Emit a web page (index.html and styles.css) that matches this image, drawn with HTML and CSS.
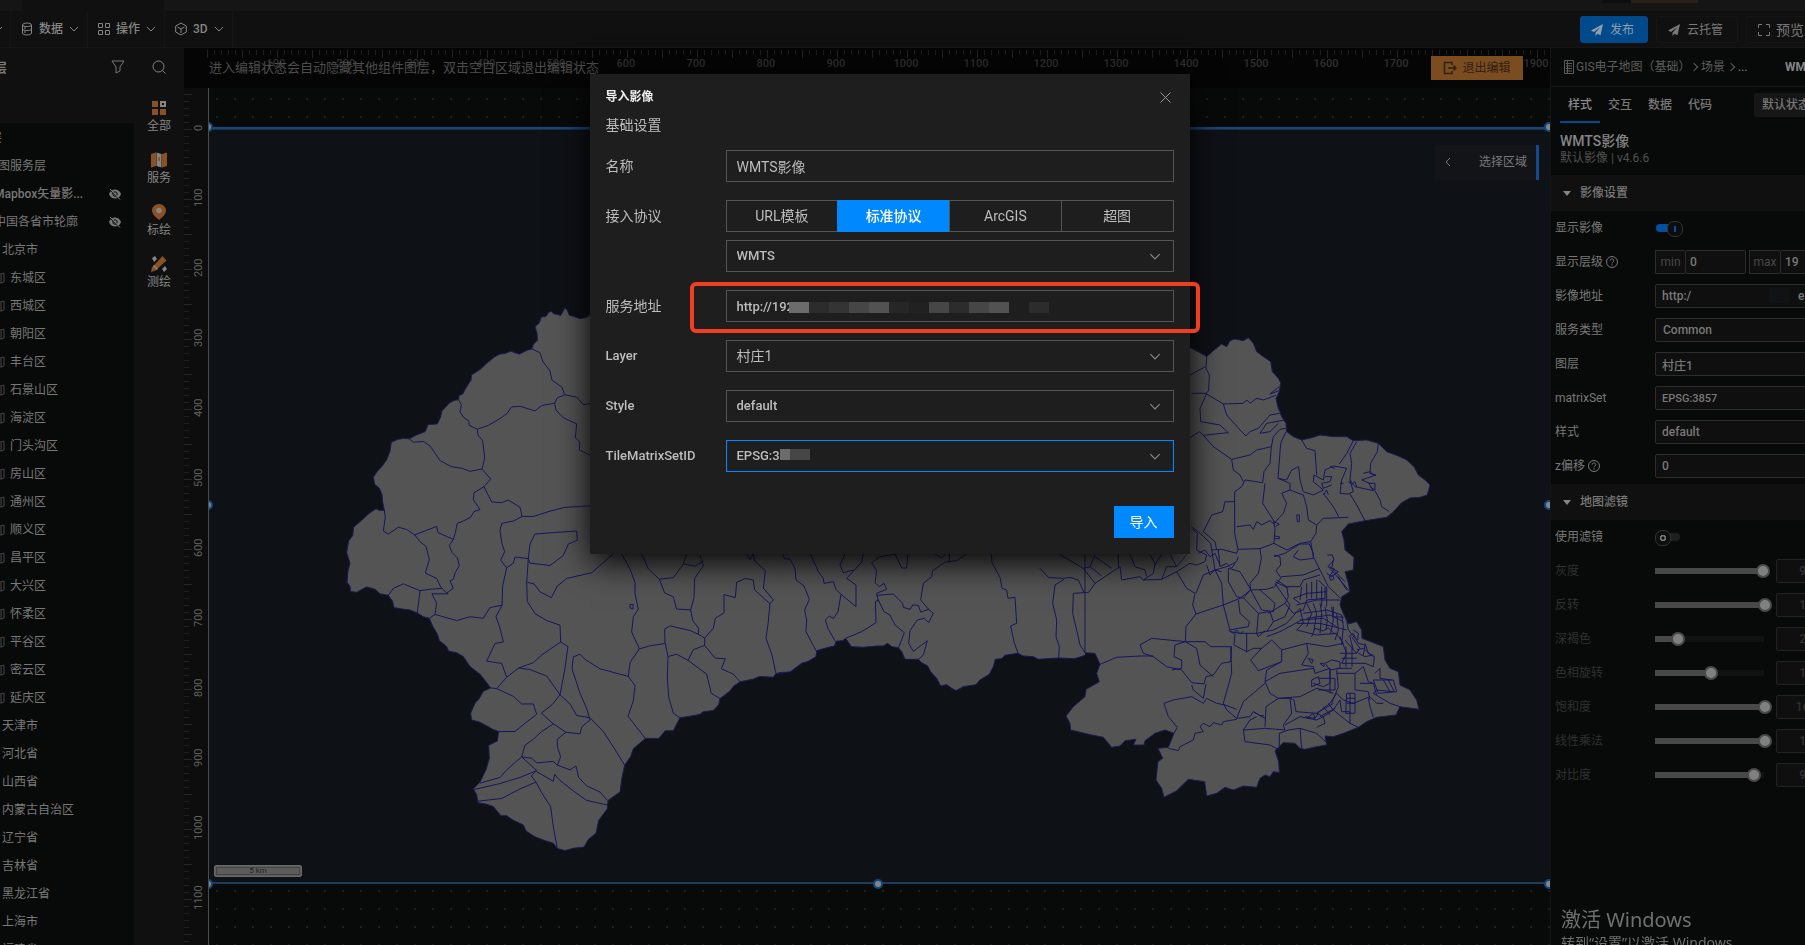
FILE: index.html
```html
<!DOCTYPE html>
<html lang="zh-CN">
<head>
<meta charset="utf-8">
<title>GIS电子地图 - 导入影像</title>
<link rel="stylesheet" href="styles.css">
</head>
<body>
<svg class="defs" aria-hidden="true">
  <symbol id="chev" viewBox="0 0 10 6"><path d="M1 1l4 4 4-4" fill="none" stroke="currentColor"/></symbol>
  <symbol id="plane" viewBox="0 0 12 12"><path d="M12 0L0 6.500l3 1.500L9.500 3 4.500 8.800V12l2-2.300 3 1.500z" fill="currentColor"/></symbol>
  <symbol id="eyeoff" viewBox="0 0 12 12"><path d="M0 6c2-6 10-6 12 0-2 6-10 6-12 0z" fill="currentColor"/><circle cx="6" cy="6" r="2.200" fill="none" stroke="#080a09"/><path d="M0 1l10.500 11" stroke="#080a09"/><path d="M1 1l10 10.500" stroke="currentColor"/></symbol>
  <symbol id="fold" viewBox="0 0 12 12"><path d="M1 2l3-1 4 1 3-1v9l-3 1-4-1-3 1zM4 1v9M8 2v9" fill="none" stroke="currentColor"/></symbol>
  <symbol id="help" viewBox="0 0 14 14"><circle cx="7" cy="7" r="5.500" fill="none" stroke="currentColor"/><path d="M5.200 5.700c0-2.400 3.600-2.300 3.600 0 0 1.400-1.800 1.300-1.800 2.700M7 9.300v1.200" fill="none" stroke="currentColor"/></symbol>
</svg>
<div class="app">
  <div class="strip"><span class="strip-tab"></span><span class="strip-end"><i></i><b></b></span></div>
  <header class="toolbar">
    <nav class="menus">
      <button class="menu menu-cut" aria-label="更多"><svg class="chev"><use href="#chev"/></svg></button>
      <button class="menu"><svg class="ic" viewBox="0 0 12 14"><path d="M1.500 3c0-2.600 9-2.600 9 0v8c0 2.600-9 2.600-9 0zM1.500 3c0 2 9 2 9 0M1.500 7c0 2 9 2 9 0M3 6h2M3 10h2" fill="none" stroke="currentColor"/></svg>数据<svg class="chev"><use href="#chev"/></svg></button>
      <button class="menu"><svg class="ic" viewBox="0 0 12 14"><path d="M.5 1.500h4v4h-4zM7.500 1.500h4v4h-4zM.5 8.500h4v4h-4zM7.500 8.500h4v4h-4z" fill="none" stroke="currentColor"/></svg>操作<svg class="chev"><use href="#chev"/></svg></button>
      <button class="menu"><svg class="ic" viewBox="0 0 12 14"><path d="M6 1l5.300 3v6L6 13 .7 10V4zM2.500 5L6 7l3.500-2M6 7v4" fill="none" stroke="currentColor"/></svg>3D<svg class="chev"><use href="#chev"/></svg></button>
    </nav>
    <div class="actions">
      <button class="act primary"><svg class="ic12"><use href="#plane"/></svg>发布</button>
      <button class="act"><svg class="ic12"><use href="#plane"/></svg>云托管</button>
      <button class="act big"><svg class="ic12" viewBox="0 0 12 12"><path d="M4 .5H.5V4M8 .5h3.500V4M4 11.500H.5V8M8 11.500h3.500V8" fill="none" stroke="currentColor"/></svg>预览</button>
    </div>
  </header>
  <div class="work">
    <aside class="layers">
      <div class="layers-head"><h2>层</h2><button class="plain" aria-label="筛选"><svg width="14" height="14" viewBox="0 0 14 14"><path d="M1 1h12L9 7v4l-4 2V7z" fill="none" stroke="currentColor"/></svg></button></div>
      <ul class="tree">
        <li class="d-root">层</li>
        <li class="d-group">图服务层</li>
        <li class="d-item">Mapbox矢量影...<svg class="eye"><use href="#eyeoff"/></svg></li>
        <li class="d-long">中国各省市轮廓<svg class="eye"><use href="#eyeoff"/></svg></li>
        <li>北京市</li>
        <li class="d-sub"><svg class="ic12"><use href="#fold"/></svg>东城区</li>
        <li class="d-sub"><svg class="ic12"><use href="#fold"/></svg>西城区</li>
        <li class="d-sub"><svg class="ic12"><use href="#fold"/></svg>朝阳区</li>
        <li class="d-sub"><svg class="ic12"><use href="#fold"/></svg>丰台区</li>
        <li class="d-sub"><svg class="ic12"><use href="#fold"/></svg>石景山区</li>
        <li class="d-sub"><svg class="ic12"><use href="#fold"/></svg>海淀区</li>
        <li class="d-sub"><svg class="ic12"><use href="#fold"/></svg>门头沟区</li>
        <li class="d-sub"><svg class="ic12"><use href="#fold"/></svg>房山区</li>
        <li class="d-sub"><svg class="ic12"><use href="#fold"/></svg>通州区</li>
        <li class="d-sub"><svg class="ic12"><use href="#fold"/></svg>顺义区</li>
        <li class="d-sub"><svg class="ic12"><use href="#fold"/></svg>昌平区</li>
        <li class="d-sub"><svg class="ic12"><use href="#fold"/></svg>大兴区</li>
        <li class="d-sub"><svg class="ic12"><use href="#fold"/></svg>怀柔区</li>
        <li class="d-sub"><svg class="ic12"><use href="#fold"/></svg>平谷区</li>
        <li class="d-sub"><svg class="ic12"><use href="#fold"/></svg>密云区</li>
        <li class="d-sub"><svg class="ic12"><use href="#fold"/></svg>延庆区</li>
        <li>天津市</li><li>河北省</li><li>山西省</li><li>内蒙古自治区</li><li>辽宁省</li><li>吉林省</li><li>黑龙江省</li><li>上海市</li><li>福建省</li>
      </ul>
    </aside>
    <nav class="cats">
      <button class="plain" aria-label="搜索"><svg width="14" height="14" viewBox="0 0 14 14"><circle cx="6.500" cy="6.500" r="5.500" fill="none" stroke="currentColor"/><path d="M10.500 10.500l3 3" stroke="currentColor"/></svg></button>
      <button class="cat"><svg viewBox="0 0 16 16"><path fill="#8a5125" d="M1 1h6v6H1zM1 9h6v6H1zM9 9h6v6H9z"/><path fill="none" stroke="#858585" stroke-width="2" d="M10 2h4v4h-4z"/></svg>全部</button>
      <button class="cat"><svg viewBox="0 0 16 16"><path fill="#8a5125" d="M0 2l5-1.500V14l-5 1.500zM11 2l5-1.500V14l-5 1.500z"/><path fill="#858585" d="M5.500.5L10.500 2v13.500L5.500 14z"/><path fill="#8a5125" d="M7 5l2 .6V9l-2-.6z"/></svg>服务</button>
      <button class="cat"><svg viewBox="0 0 16 16"><path fill="#8a5125" d="M8 0c4 0 7 3 7 6.500C15 11 10 14 8 16 6 14 1 11 1 6.500 1 3 4 0 8 0z"/><circle cx="8" cy="6.500" r="2.800" fill="#858585"/></svg>标绘</button>
      <button class="cat"><svg viewBox="0 0 16 16"><path d="M1 2l3-2 2 3-3 3zM11 13l3-3 2 3-3 3z" fill="#858585"/><path fill="#8a5125" d="M11.500 0L15.500 4.500 4.500 14.500 0 16l1-4.500z"/><path d="M2.500 9.500l4 4" stroke="#858585" stroke-width="1.500"/></svg>测绘</button>
    </nav>
    <main class="editor">
      <div class="ruler-x">
        <ol><li>100</li><li>200</li><li>300</li><li>400</li><li>500</li><li>600</li><li>700</li><li>800</li><li>900</li><li>1000</li><li>1100</li><li>1200</li><li>1300</li><li>1400</li><li>1500</li><li>1600</li><li>1700</li><li>1800</li><li>1900</li></ol>
        <div class="edit-bar"><span>进入编辑状态会自动隐藏其他组件图层，双击空白区域退出编辑状态</span>
          <button class="exit"><svg viewBox="0 0 14 14"><path d="M9 4V1.500H1.500v11H9V10M5 7h8M10.500 4.500L13 7l-2.500 2.500" fill="none" stroke="currentColor" stroke-width="1.500"/></svg>退出编辑</button></div>
      </div>
      <div class="ruler-y"><ol><li>0</li><li>100</li><li>200</li><li>300</li><li>400</li><li>500</li><li>600</li><li>700</li><li>800</li><li>900</li><li>1000</li><li>1100</li></ol></div>
      <div class="stage">
        <svg class="map" viewBox="209 88 1341 857" preserveAspectRatio="xMinYMin slice" role="img" aria-label="村庄影像">
          <rect x="209" y="129" width="1341" height="754" fill="#0e1116"/>
          <path d="M209 128h1341" stroke="#0c4a85" stroke-width="2"/><path d="M209 129.500h1341" stroke="#292d33"/>
          <path d="M209 883h1341" stroke="#1d3c5a" stroke-width="2"/>
          <g transform="translate(320 280) scale(.33333 .38265)">
            <path class="land" d="M830 60L808 92 800 98 780 101 760 95 748 92 742 80 735 72 728 84 722 93 712 90 700 88 695 82 686 84 678 95 664 97 658 112 645 122 651 138 652 158 640 168 636 180 620 184 598 194 585 190 572 186 555 192 538 194 520 203 500 218 480 234 455 248 453 262 445 272 436 285 428 298 417 302 416 313 405 314 390 320 366 342 362 358 352 376 324 378 316 396 290 405 268 415 250 414 232 417 214 424 210 448 200 470 185 488 170 502 160 516 164 534 178 544 186 560 188 580 193 602 178 602 168 598 150 608 125 628 101 646 98 668 86 682 80 712 90 740 84 760 81 790 90 800 92 814 110 816 140 802 165 808 180 820 205 824 218 840 222 856 240 859 268 862 292 870 310 880 328 884 338 905 352 925 358 942 380 958 386 970 410 974 430 984 450 1010 480 1030 500 1052 512 1066 490 1075 476 1096 466 1104 452 1132 455 1150 478 1155 500 1165 520 1175 536 1180 532 1205 506 1216 508 1250 498 1280 480 1312 460 1330 470 1345 474 1366 500 1370 520 1376 543 1400 560 1400 580 1412 610 1424 618 1440 645 1455 675 1465 700 1472 712 1486 735 1491 760 1485 792 1482 805 1462 828 1446 836 1412 862 1382 864 1360 900 1338 906 1300 914 1268 932 1245 940 1225 976 1198 1016 1198 1036 1178 1060 1178 1080 1144 1110 1140 1140 1135 1150 1128 1180 1125 1196 1110 1200 1094 1230 1074 1240 1062 1260 1050 1300 1043 1318 1036 1360 1038 1368 1028 1390 1027 1390 700 830 700z"/>
            <path class="edge" d="M636 180L660 190 668 212 690 238 696 262 726 280 734 300 712 308 704 322 708 340 730 360 770 376 766 412 780 424 778 444 815 460M734 300L770 306 790 326 815 322M416 313L424 326 420 345 432 360 446 368 448 380 472 390 505 380 540 362 562 348 574 332 600 330 645 342 665 328 704 322M268 415L280 424 310 422 330 434 345 452 360 472 395 488 425 492 450 500 486 494 494 465 488 420 474 405 472 390M486 494L512 520 492 540 462 556 460 574 480 600 462 605 452 620 430 630 412 636 406 660 400 678 388 694 396 712 412 726 418 746 406 764 400 782 390 786 400 806 380 818 362 802 350 780 316 766 328 730 318 696 300 684 284 666 260 652 235 646 205 664 190 656 196 620 193 602M284 666L350 644 354 660 400 678M492 540L515 580 545 582 565 575 600 594 606 618 580 630 545 636 540 655 546 690 554 710 542 732 560 752 580 740 585 724 625 728 630 740 690 746 730 720 745 690 772 680 770 656 700 660 645 664 630 690 625 728 620 790 622 840 645 872 680 890 720 902 722 946 744 958 734 1020 720 1084 696 1110 664 1132 700 1160 738 1182 780 1186 785 1168 810 1150 800 1120 780 1080 756 1016 760 985 780 978 796 992 840 1016 925 1036 945 1060 940 1100 924 1140 976 1198M606 618L640 618 690 604 735 594 815 590M622 790L642 794 660 815 694 830 712 800 740 780 780 772 815 765 880 716M560 752L548 800 546 850 510 856 490 884 450 880 410 890 345 874 350 845 336 820 385 820M205 824L220 806 250 794 300 812 330 808 365 806M300 812L292 870M328 884L345 874M546 850L528 880 540 910 550 946 525 950 500 996 545 1002 560 1038 530 1068 512 1066M560 1038L596 1014 630 1018 680 1035 720 1084 750 1108 770 1138 810 1144 850 1180 880 1220 914 1268M596 1014L640 1000 665 980 722 946M530 1068L580 1088 605 1108 640 1108 650 1135 620 1155 585 1180 536 1180M700 1160L665 1180 640 1200 615 1216 605 1246 635 1250 650 1262 700 1258 712 1268 722 1246 712 1220 712 1200 738 1182M605 1246L560 1280 540 1300 480 1315M605 1246L650 1282 600 1300 540 1316 460 1332M650 1282L634 1296 648 1312 600 1330 545 1355 474 1362M648 1312L665 1340 692 1376 700 1430 712 1486M650 1285L700 1310 704 1292 720 1308 760 1335 800 1360 862 1372M712 1268L750 1280 768 1270 776 1300 800 1322 840 1338 862 1360M905 716L930 755 945 790 945 820 955 860 940 880 935 920 958 964 930 1000 925 1036M958 964L990 956 1035 950 1034 912 1050 904 1110 916 1140 928 1154 936 1154 955 1120 966 1104 994 1070 978 1044 984 1036 950M1044 984L1042 1040 1046 1090 1060 1132 1080 1144M1104 994L1160 1030 1174 1080 1200 1094M1154 955L1185 988 1216 990 1204 1016 1240 1030 1260 1050M965 716L985 755 1018 782 1034 818 1060 828 1070 860 1112 862 1122 830 1124 780 1150 746 1140 720M1018 782L1060 778 1090 742 1100 716M1090 742L1125 748 1150 735M1112 862L1118 890 1136 910 1135 926M1154 936L1180 910 1186 884 1212 870 1212 822 1246 830 1250 790 1276 780 1300 784 1304 810 1350 846 1360 836 1330 805 1336 760 1305 735 1300 716M1350 846L1344 900 1338 936 1356 980 1368 1028M1280 716l10 15 8-14 8 20M930 848h10l-2 12-8-4z"/>
          </g>
          <g transform="translate(780 540) scale(.33333)">
            <path class="land noline" d="M-8 0V398L30 396 65 370 85 364 108 350 110 332 145 322 164 318 168 304 188 302 197 295 214 320 250 322 290 318 310 318 323 310 335 320 355 323 365 335 375 358 415 358 425 368 443 378 452 395 470 415 482 438 500 434 515 445 528 452 550 440 588 434 600 420 628 403 640 380 646 358 665 356 675 346 714 340 730 348 760 350 775 358 835 354 885 356 915 346 915 0z"/>
            <path class="edge" d="M-5 398L30 396 65 370 85 364 108 350 110 332 145 322 164 318 168 304 188 302 197 295 214 320 250 322 290 318 310 318 323 310 335 320 355 323 365 335 375 358 415 358 425 368 443 378 452 395 470 415 482 438 500 434 515 445 528 452 550 440 588 434 600 420 628 403 640 380 646 358 665 356 675 346 714 340 730 348 760 350 775 358 835 354 885 356 915 346M8 42L12 55 30 58 45 85 48 120 72 138 88 178 74 210 80 240 78 275 108 332M92 42L115 95 130 115 132 130 160 125 168 148 183 163 228 200 228 135 200 115 222 92 245 66 250 42M183 163L174 215 160 236 148 228 136 240 145 268 166 304M197 295L245 275 288 248 286 185 295 180 312 215 330 225 345 255 373 278 356 323M195 42L180 75 190 98 222 90M350 42L300 50 275 68 290 92 285 128 298 140 312 130 320 148 290 160 295 185M290 166L340 162 368 190 370 202 390 208 398 195 415 196 422 216 446 208 460 220 446 248 432 235 412 240 390 272 386 310 400 334 442 302 430 345 415 358M345 42L365 84 380 84 384 42M560 42L530 62 496 66 458 92 455 110 430 130 422 180 446 208M508 42V62M465 42l20 12 12-12M634 42L636 68 660 112 666 145 680 150 684 175 705 172 710 250 692 258 702 305 714 340"/>
          </g>
          <g transform="translate(1040 320) scale(.33333)">
            <path class="land" d="M440 80L455 85 480 98 500 110 520 92 545 72 560 80 570 62 585 57 610 62 625 53 640 70 650 95 670 110 692 125 697 155 715 175 722 188 718 215 708 235 714 262 725 290 738 310 740 335 760 350 785 360 820 352 840 345 880 350 920 350 940 362 980 360 1015 370 1040 395 1075 408 1100 420 1122 440 1135 465 1155 480 1170 495 1162 525 1140 532 1110 534 1085 548 1060 575 1040 592 975 602 925 612 905 635 912 660 915 690 942 712 940 750 915 755 925 790 930 815 905 830 900 855 912 885 925 912 950 905 965 930 966 955 1000 968 1030 980 1035 1020 1050 1045 1075 1055 1080 1095 1110 1110 1130 1140 1137 1168 1080 1160 1068 1185 1010 1192 980 1205 955 1222 910 1240 880 1250 855 1248 860 1275 830 1280 795 1288 780 1285 765 1270 730 1268 705 1292 716 1325 718 1358 700 1355 690 1370 675 1365 660 1375 650 1402 610 1398 580 1410 555 1402 530 1420 500 1428 494 1385 445 1378 410 1412 372 1432 365 1405 348 1380 354 1325 368 1315 354 1285 385 1282 402 1240 375 1230 345 1240 315 1262 312 1275 280 1275 288 1258 255 1262 240 1278 215 1282 190 1252 155 1245 92 1230 90 1210 78 1188 100 1160 135 1130 138 1108 178 1085 170 1060 180 1033 165 1000 135 998 135 690 440 690z"/>
            <path class="edge" d="M500 110L498 145 508 165 506 210 500 220 455 220M450 165L496 140M500 220L480 265 482 305 540 315 565 338 490 346 478 335 450 353M500 222L550 252 610 250 620 240 630 250 650 235 670 240 708 226M550 252L560 285 600 330 618 348 630 335 655 325 690 285 718 280M690 222L718 200M690 222l28-10M490 346L520 380 575 418 630 405 650 390 694 380 690 430 672 455 668 488 615 480 605 500 584 515 584 640 594 688 660 686 702 670 705 625 700 600 668 550 675 490M575 418L580 450 600 465 610 485M694 380L700 350 720 328 738 325M660 340L680 310 735 300M660 340L690 335 715 310M738 335L722 370 714 475 750 490 750 510 725 520 740 550 730 580 702 610M714 475L740 480 755 450 776 440 780 480 790 515 820 525 850 510 820 485 822 465 850 480 855 450 880 438 920 445 905 480 900 520 925 522 940 515 930 480 935 430 930 400 950 365M785 360L800 385 825 392 830 465M940 362L920 400 898 432M1015 370L1012 395 992 430 990 460 1008 465 965 480 985 488 1000 512 945 500 930 480M1005 512L1020 540 1025 560 1048 575M930 522L950 555 975 602M750 510L790 525 800 560 805 600 830 615 828 640 812 665 780 670 740 690 702 670M830 615L850 595 925 592M850 520L880 560 896 590M584 545L555 545 548 575 515 585 490 635 525 665 530 690M455 620L480 640 512 670 515 690 545 688 590 700 594 688M590 620L630 615 640 628 650 605 665 615 690 602 702 612M702 605l16 8-12 6M702 648l16 2v6h-14M770 585h8v20h-6zM660 686L664 715 655 760 630 790 632 810 680 808 705 800 725 770 790 765 840 745M702 705L720 710 722 735 708 752 722 772M702 710L735 700 780 672 808 672 820 700 820 715 780 720 760 710 775 690M812 665L820 710 840 750 865 800 902 835M455 625L472 640 470 690 500 705 495 725 470 735 450 730 410 755 440 805 465 820 458 855 468 882 438 920 436 965 335 955 300 975 310 1000 340 1010 380 1040 425 1050 455 1088 492 1092 498 1070 520 1065 545 1030 572 1025 575 980 512 980 495 965 436 965M436 965L405 975 402 1010 425 1020 425 1045 395 1050M436 965L470 985 480 1035 520 1070M515 690L525 750 490 765 468 820M525 750L560 740 590 725 595 710M525 750L545 790 550 855 468 882M565 745L565 785 590 830 610 835 632 808 600 755 565 745M550 855L600 835 632 810 665 870 700 875 705 850 660 810M550 855L570 930 595 925 625 920 628 905 600 880 595 840M570 935L600 940 650 940 655 880 612 835M655 880L690 875 700 905 735 890 750 855 705 790M650 940L700 930 740 910 780 865M680 950L720 935 785 900M585 940L582 975 620 995 620 940M620 995L640 985 665 985 695 960 725 990 725 1025 655 1052 632 1020 665 985M725 990L800 970 805 1000 785 1035 820 1040M725 1025L680 1050 675 1085 720 1060 820 1045M675 1085L690 1120 715 1135 780 1130 830 1105 850 1110 880 1120M675 1090L610 1145 590 1195 560 1170 550 1150 575 1060 572 980M590 1195L630 1190 640 1175 675 1195M675 1220L678 1160 715 1135 750 1135 755 1180 730 1215 735 1230 675 1225 610 1230 615 1265 690 1275 718 1290M480 1220L490 1210 510 1220 520 1208 545 1215 550 1205 590 1198M480 1220L490 1235 465 1240 460 1260 420 1280 415 1292 385 1285M372 1150L400 1140 455 1130 490 1150 500 1135 530 1150 555 1155 590 1168M372 1150L385 1190 412 1222 402 1240M455 1095L460 1110 490 1135 498 1092M180 1033L230 1012 300 1008 340 1008M718 1290L718 1240 745 1230 780 1225 785 1285M780 1225L830 1240 862 1270M45 795L38 850 50 900 48 950 58 980 56 1015M0 745L25 772 70 775 90 772 115 780 132 818 100 820 98 880 110 930 120 975 135 998M45 795L72 778M132 818L145 818 165 790 240 740 245 780 300 770 310 780 365 778 410 755M58 703L130 745 165 790M130 745L150 740 165 703M150 740L185 768M165 710L215 745M235 703V740M270 703L285 740 315 750 320 770M310 780L340 760 345 730 330 703M345 735L365 703M365 778L380 740 410 740 390 703M410 740L440 703"/>
            <path class="edge" d="M750 1135L762 1140 768 1175 830 1180 870 1150 890 1120 910 1140 940 1150 990 1130 1010 1150 1030 1150M830 1180L850 1190 880 1170 930 1210 955 1222M880 1170L900 1140 905 1175 930 1175 930 1210M1000 1192L990 1160 985 1135M1080 1160L1050 1150 1000 1120 1010 1110 1060 1115M710 780L740 800 780 800 790 780 840 765M740 800L745 830 735 850 760 880 790 870 800 840 855 835 855 800 835 780M785 800L780 840M800 790v45M815 785v50M830 780v58M845 800v60M860 800v60M760 835L800 820 860 815M770 855L830 840 900 840M780 865L790 910 770 930 830 945 890 940 910 970 860 980 800 970M790 880L860 870 905 885M800 895L870 885 910 905M780 900L850 895 890 920M770 910L840 910 920 930M800 850L815 880 800 920M820 850L830 880 822 930M840 850L845 880 840 940M855 860L862 900 858 930M875 860L880 900 872 940M890 880L895 930 885 960M905 885L910 920 905 975M920 905L925 930 945 955M815 950l10-25 25 8 15-10 20 20M880 860v30l32 2M862 705h15l5 15-18 20 20 8-15 20M880 720l-5 25 20 10-20 15-15-10M870 745L930 815M885 755L915 785M895 770l25 40M868 770l10-4 4 10-10 5zM900 950L920 1000 905 1030 975 1030 1000 1040 1003 1010 985 1000 975 970M915 960L950 1000 960 985 935 950M930 950l10 40M918 980v60M936 980v60M900 1000h50M905 1015h45M890 1045h45M855 1030l20-10 25 5v20l-30 5zM820 1040L825 1060 870 1045 870 1090 850 1100 820 1090M835 1075h50v35h-50M870 1050v70M890 1050L895 1100 875 1150M890 1060h55L970 1040 985 1085 1000 1090M945 1060V1110L985 1115 990 1140M960 1090h40l10 35M1005 1060l15-15v30l35 5M1000 1080h60l10 35-55 5zM1030 1080l20 35M1045 1080l18 35M1000 1010L970 985 950 990M805 1015l15 5-5 10zM840 1030h12v10zM815 1080l20-10 5 20-25 10zM920 1120h25v60h-28zM930 1120v60M920 1135h25M920 1150h25M800 1195l20-15 5 15 10-15M830 1180l50-30M840 1190l45-25M850 1160l20 25M865 1150l15 20M830 1200l20-10 5 20-25 12M735 1215L780 1190 830 1200M795 1190l30 5M855 470h20l-5 15-25 5 5 15 25-10M850 525l10-15 5 15M900 490h10M870 440l15 5M925 485l10 8 10-8 5 15M970 460l20-5 10 12M985 490h20v20l-15-10M640 1175l20 12 12 0M610 1230l20-30 20-10M475 700l20-10 15 20 15-10 15 35M500 735l10 30 15-15 20 5M535 690l5 50 20-10 15 15 10-15M565 930l15 10 10-10 10 12 10-8M650 940l5 10 20-18M700 905l-20 30M735 850l-50 30M745 805l-40-20M760 835l20 15M925 950l15-10 15 30 20 5-5 30M940 930l15 10-2 20M955 1000l20 10 25-5"/>
          </g>
          <g fill="#858585" stroke="#0c4a85" stroke-width="2"><circle cx="208" cy="127" r="4"/><circle cx="1549" cy="127" r="4"/><circle cx="208" cy="505" r="4"/><circle cx="1549" cy="505" r="4"/><circle cx="208" cy="884" r="4"/><circle cx="878" cy="884" r="4"/><circle cx="1549" cy="884" r="4"/></g>
        </svg>
        <div class="scale">5 km</div>
        <button class="region"><svg viewBox="0 0 6 10"><path d="M5 1L1 5l4 4" fill="none" stroke="currentColor"/></svg>选择区域</button>
      </div>
    </main>
    <aside class="props"><div class="props-in">
      <div class="crumb"><svg viewBox="0 0 10 14"><path d="M.5.5h9v13h-9zM2 3.500h6M2 6h6M2 8.500h6M2 11h6M3.500 1v12" fill="none" stroke="currentColor"/></svg><a href="#">GIS电子地图（基础）</a><i></i><a href="#">场景</a><i></i><a href="#" class="dots">...</a><strong>WMTS影像</strong></div>
      <div class="tabs"><button class="on">样式</button><button>交互</button><button>数据</button><button>代码</button><button class="state">默认状态</button></div>
      <div class="head"><h1>WMTS影像</h1><p>默认影像 | v4.6.6</p></div>
      <h3 class="sec">影像设置</h3>
      <div class="rows">
        <div class="row"><label for="show">显示影像</label><input class="switch on" type="checkbox" id="show" checked></div>
        <div class="row"><label for="lmin">显示层级<svg class="help"><use href="#help"/></svg></label><span class="addon">min</span><input class="box mini" id="lmin" value="0"><span class="addon second">max</span><input class="box mini" aria-label="max" value="19"></div>
        <div class="row"><label for="url2">影像地址</label><span class="masked"><input class="box" id="url2" value="http:/"><i></i><em>en</em></span></div>
        <div class="row"><label for="kind">服务类型</label><select class="box" id="kind"><option>Common</option></select></div>
        <div class="row"><label for="lay2">图层</label><input class="box" id="lay2" value="村庄1"></div>
        <div class="row"><label for="mset">matrixSet</label><input class="box" id="mset" value="EPSG:3857"></div>
        <div class="row"><label for="sty2">样式</label><input class="box" id="sty2" value="default"></div>
        <div class="row"><label for="zoff">z偏移<svg class="help"><use href="#help"/></svg></label><input class="box" id="zoff" value="0"></div>
      </div>
      <h3 class="sec">地图滤镜</h3>
      <div class="rows">
        <div class="row"><label for="usef">使用滤镜</label><input class="switch" type="checkbox" id="usef"></div>
        <div class="row off"><label for="f1">灰度</label><input type="range" id="f1" value="98" disabled style="--v:98%"><input class="box num" aria-label="灰度值" value="98" disabled></div>
        <div class="row off"><label for="f2">反转</label><input type="range" id="f2" value="100" disabled style="--v:100%"><input class="box num" aria-label="反转值" value="10" disabled></div>
        <div class="row off"><label for="f3">深褐色</label><input type="range" id="f3" value="16" disabled style="--v:16%"><input class="box num" aria-label="深褐色值" value="20" disabled></div>
        <div class="row off"><label for="f4">色相旋转</label><input type="range" id="f4" value="48" disabled style="--v:48%"><input class="box num" aria-label="色相旋转值" value="18" disabled></div>
        <div class="row off"><label for="f5">饱和度</label><input type="range" id="f5" value="100" disabled style="--v:100%"><input class="box num" aria-label="饱和度值" value="160" disabled></div>
        <div class="row off"><label for="f6">线性乘法</label><input type="range" id="f6" value="100" disabled style="--v:100%"><input class="box num" aria-label="线性乘法值" value="10" disabled></div>
        <div class="row off"><label for="f7">对比度</label><input type="range" id="f7" value="89" disabled style="--v:89%"><input class="box num" aria-label="对比度值" value="90" disabled></div>
      </div>
    </div></aside>
  </div>
</div>
<div class="watermark"><b>激活 Windows</b><span>转到“设置”以激活 Windows。</span></div>
<div class="modal" role="dialog" aria-labelledby="mt">
  <header><h2 id="mt">导入影像</h2><button class="close" aria-label="关闭"><svg viewBox="0 0 11 11"><path d="M.5.5l10 10M10.500.5l-10 10" stroke="currentColor"/></svg></button></header>
  <h3>基础设置</h3>
  <form>
    <div class="field"><label for="name">名称</label><input class="ctl mixed" id="name" value="WMTS影像"></div>
    <div class="field"><span class="lab">接入协议</span><div class="seg"><button type="button">URL模板</button><button type="button" class="on">标准协议</button><button type="button">ArcGIS</button><button type="button">超图</button></div></div>
    <div class="field"><span></span><div class="sel"><select class="ctl latin" aria-label="协议"><option>WMTS</option></select><svg class="chev"><use href="#chev"/></svg></div></div>
    <div class="field"><label for="url">服务地址</label><div class="sel"><input class="ctl latin" id="url" value="http://192"><div class="mosaic"><i class="m5"></i><i class="m2"></i><i class="m3"></i><i class="m4"></i><i class="m45"></i><i class="m1"></i><i class="m0"></i><i class="m4"></i><i class="m2"></i><i class="m4"></i><i class="m45"></i><i></i><i class="m2"></i></div><div class="mark"></div></div></div>
    <div class="field"><label class="latin" for="layer">Layer</label><div class="sel"><select class="ctl mixed" id="layer"><option>村庄1</option></select><svg class="chev"><use href="#chev"/></svg></div></div>
    <div class="field"><label class="latin" for="style">Style</label><div class="sel"><select class="ctl latin" id="style"><option>default</option></select><svg class="chev"><use href="#chev"/></svg></div></div>
    <div class="field"><label class="latin" for="tms">TileMatrixSetID</label><div class="sel"><select class="ctl latin focus" id="tms"><option>EPSG:3857</option></select><div class="mosaic short"><i class="m5"></i><i class="m4"></i></div><svg class="chev"><use href="#chev"/></svg></div></div>
    <div class="foot"><button type="button" class="import">导入</button></div>
  </form>
</div>
</body>
</html>
```
FILE: styles.css
```css
* { box-sizing: border-box; }
body { margin: 0; height: 100vh; overflow: hidden; background: #080a09; color: #787878; font: 12px/16px Roboto, "Noto Sans CJK SC", sans-serif; }
button, input, select { font: inherit; color: inherit; margin: 0; padding: 0; border: 0; background: none; border-radius: 0; appearance: none; outline: 0; }
ul, ol { list-style: none; margin: 0; padding: 0; }
h1, h2, h3, p { margin: 0; font-weight: 400; font-size: inherit; }
a { color: inherit; text-decoration: none; }
svg { display: block; flex: none; }
.defs { position: absolute; width: 0; height: 0; }
.ic { width: 12px; height: 14px; }
.ic12 { width: 12px; height: 12px; }
.chev { width: 10px; height: 6px; }
.plain { display: flex; }

.app { height: 100%; display: flex; flex-direction: column; }
.strip { flex: none; height: 11px; background: #151515; display: flex; justify-content: space-between; padding: 0 107px 0 22px; }
.strip-tab { width: 142px; background: #101010; }
.strip-end { display: flex; height: 3px; }
.strip-end i { width: 29px; background: #0e0e0e; }
.strip-end b { width: 67px; background: #2b1e15; }
.toolbar { flex: none; height: 37px; background: #101010; border-bottom: 1px solid #161616; display: flex; justify-content: space-between; overflow: hidden; }
.menus { display: flex; }
.menu { display: flex; align-items: center; gap: 6px; padding: 0 8px 0 10px; border-right: 1px solid #151515; font-weight: 500; color: #858585; }
.menu-cut { width: 11px; padding: 0; }
.menu-cut .chev { margin-left: -7px; }
.actions { display: flex; gap: 8px; padding: 5px 0 4px; width: 225px; }
.act { flex: none; display: flex; align-items: center; gap: 7px; padding: 0 14px 0 11px; border: 1px solid #151515; border-radius: 3px; height: 27px; }
.act.primary { background: #004a8c; border-color: #004a8c; color: #8f9fae; padding-right: 13px; padding-left: 10px; }
.act.big { font-size: 14px; gap: 6px; }

.work { flex: 1; min-height: 0; display: grid; grid-template-columns: 134px 50px minmax(0, 1fr) 255px; }
.layers { overflow: hidden; display: flex; flex-direction: column; }
.layers-head { flex: none; height: 75px; background: #101010; display: flex; justify-content: space-between; padding: 12px 9px 0 0; align-items: flex-start; }
.layers-head h2 { margin-left: -6px; font-size: 13px; font-weight: 700; }
.tree { margin-left: -12px; flex: 1; overflow: hidden; padding-top: 1px; }
.tree li { height: 28px; display: flex; align-items: center; padding: 0 13px 0 14px; white-space: nowrap; }
.tree .d-root { padding-left: 2px; }
.tree .d-group { padding-left: 10px; }
.tree .d-item { padding-left: 6px; font-weight: 500; }
.tree .d-long { padding-left: 6px; }
.tree .d-sub { padding-left: 5px; gap: 5px; }
.tree .d-sub svg { color: #444; }
.eye { width: 12px; height: 12px; margin-left: auto; }
.cats { background: #101010; display: flex; flex-direction: column; align-items: center; padding-top: 12px; }
.cats .plain { margin-bottom: 26px; color: #858585; }
.cat { flex: none; height: 52px; display: flex; flex-direction: column; align-items: center; gap: 2px; color: #858585; }
.cat svg { width: 16px; height: 16px; }

.editor { min-width: 0; display: grid; grid-template: 40px minmax(0, 1fr) / 25px minmax(0, 1fr); }
.ruler-x { grid-column: 1 / 3; position: relative; background: repeating-linear-gradient(90deg, #222 0 1px, transparent 1px 35px) 23px 2px/100% 8px no-repeat, repeating-linear-gradient(90deg, #1c1c1c 0 1px, transparent 1px 7px) 23px 2px/100% 5px no-repeat, #050505; overflow: hidden; }
.ruler-x ol { display: flex; padding: 8px 0 0 57px; }
.ruler-x li { flex: 0 0 70px; text-align: center; color: #303030; font-weight: 500; font-size: 11px; }
.edit-bar { position: absolute; inset: 8px 27px 8px 25px; display: flex; justify-content: space-between; align-items: center; font-size: 13px; color: #4c4c4c; white-space: nowrap; }
.exit { display: flex; align-items: center; gap: 5px; height: 24px; width: 92px; justify-content: center; background: #7b4c1f; color: #2e2013; font-size: 12px; }
.exit svg { width: 14px; height: 14px; }
.ruler-y { background: repeating-linear-gradient(#262626 0 1px, transparent 1px 35px) 0 6px/8px 100% no-repeat, repeating-linear-gradient(#202020 0 1px, transparent 1px 7px) 0 6px/5px 100% no-repeat, #0d0d0d; border-right: 1px solid #4a4a4a; overflow: hidden; }
.ruler-y ol { padding: 5px 0 0 8px; }
.ruler-y li { height: 70px; width: 14px; line-height: 14px; writing-mode: vertical-rl; transform: rotate(180deg); text-align: center; font-size: 11px; color: #606060; }
.stage { position: relative; overflow: hidden; background: radial-gradient(circle at 1px 1px, #1d201e 1px, transparent 1px) 7px 10px/18px 18px #080a09; }
.map { position: absolute; inset: 0; width: 100%; height: 100%; }
.land { fill: #545454; stroke: #1b1b55; stroke-width: 1; vector-effect: non-scaling-stroke; }
.noline { stroke: none; }
.edge { fill: none; stroke: #16165e; stroke-width: 1; vector-effect: non-scaling-stroke; stroke-linejoin: round; }
.scale { position: absolute; left: 5px; bottom: 68px; width: 88px; height: 12px; background: #5c5c5c; border: 1px solid #6a6a6a; outline: 1px solid #444; outline-offset: -3px; border-radius: 2px; color: #222; font-size: 8px; line-height: 10px; text-align: center; }
.region { position: absolute; right: 11px; top: 57px; width: 104px; height: 35px; background: #121418; border-right: 3px solid #124a8c; display: flex; align-items: center; justify-content: space-between; padding: 0 9px 2px 10px; }
.region svg { width: 6px; height: 10px; }

.props { background: #080a09; border-left: 1px solid #141414; overflow: hidden; }
.props-in { width: 320px; }
.crumb { height: 39px; display: flex; align-items: center; padding-left: 13px; border-bottom: 1px solid #161616; color: #5c5c5c; white-space: nowrap; }
.crumb svg { width: 10px; height: 14px; margin-right: 2px; }
.crumb i { flex: none; width: 6px; height: 6px; border: solid #5c5c5c; border-width: 1px 1px 0 0; transform: rotate(45deg); margin: 0 4px 0 3px; }
.crumb a:first-of-type { width: 112px; }
.crumb .dots { width: 47px; color: #858585; }
.crumb strong { font-weight: 700; color: #858585; }
.tabs { display: flex; height: 36px; padding-left: 9px; align-items: stretch; font-weight: 500; }
.tabs button { width: 40px; padding-top: 2px; border-bottom: 2px solid transparent; }
.tabs .on { border-color: #004a8c; color: #8a8a8a; }
.tabs .state { margin: 6px 0 6px 34px; width: 80px; padding: 0 0 0 8px; text-align: left; background: #161616; border: 0; border-radius: 2px; }
.head { height: 52px; padding: 8px 0 0 9px; }
.head h1 { font-size: 14px; line-height: 20px; font-weight: 500; color: #858585; }
.head p { color: #505050; line-height: 14px; }
.sec { height: 36px; line-height: 36px; background: #101010; padding-left: 12px; display: flex; align-items: center; gap: 9px; font-weight: 500; }
.sec::before { content: ""; border: 4px solid transparent; border-top: 5px solid #858585; border-bottom: 0; }
.rows { padding: 0 0 1px 4px; }
.row { height: 34px; display: flex; align-items: center; }
.row label { flex: none; width: 100px; display: flex; align-items: center; gap: 2px; }
.help { width: 14px; height: 14px; }
.box { width: 200px; height: 24px; border: 1px solid #2c2c2c; border-radius: 2px; background: #0f0f0f; padding: 0 6px; font-size: 12px; font-weight: 500; }
select.box { padding-left: 7px; }
.addon { width: 30px; height: 24px; border: 1px solid #2c2c2c; border-right: 0; line-height: 22px; text-align: center; color: #484848; background: #0f0f0f; flex: none; }
.second { margin-left: 3px; width: 31px; }
.box.mini { width: 61px; padding-left: 4px; flex: none; }
#mset { font-size: 11px; }
.masked { position: relative; }
.masked i { position: absolute; left: 114px; top: 4px; width: 20px; height: 15px; background: #111216; }
.masked em { position: absolute; left: 143px; top: 4px; font-style: normal; font-weight: 500; }
.switch { width: 25px; height: 14px; position: relative; }
.switch::before { content: ""; position: absolute; inset: 3px 0 3px 6px; border-radius: 4px; background: #1e1e1e; }
.switch::after { content: ""; position: absolute; left: 0; top: 0; width: 14px; height: 14px; border-radius: 7px; border: 1px solid #333; background: radial-gradient(circle, #0d0d0d 1px, #777 2px, #777 3px, #0d0d0d 3px); }
.switch.on::before { inset: 3px 6px 3px 1px; background: #0052a0; }
.switch.on::after { left: 12px; background: linear-gradient(#0052a0, #0052a0) center/2px 6px no-repeat #0d0d0d; }
.off label { color: #303030; }
input[type=range] { width: 117px; height: 14px; flex: none; background: linear-gradient(90deg, #484848 var(--v), #101112 var(--v)) 0 50%/109px 6px no-repeat; border-radius: 3px; }
input[type=range]::-webkit-slider-thumb { appearance: none; width: 14px; height: 14px; border-radius: 7px; background: #808080; border: 2px solid #4a4a4a; }
.box.num { width: 60px; margin-left: 4px; text-align: center; color: #303030; border-color: #222; padding: 0; flex: none; }

.watermark { position: fixed; right: 0; bottom: -8px; width: 244px; font-family: "Noto Sans", "Noto Sans CJK SC", sans-serif; color: #707070; pointer-events: none; }
.watermark b { display: block; font-size: 20px; line-height: 26px; font-weight: 400; }
.watermark span { display: block; font-size: 14px; line-height: 20px; }

.modal { position: fixed; top: 74px; left: 50%; width: 600px; margin-left: -313px; min-height: 480px; padding: 14px 16px 16px; background: #1e1e1e; color: #bdbdbd; font-size: 14px; line-height: 20px; box-shadow: 0 8px 32px #000; }
.modal header { display: flex; justify-content: space-between; align-items: center; height: 18px; }
.modal h2 { font-size: 12px; font-weight: 700; color: #f0f0f0; }
.close { display: flex; color: #999; padding: 3px; }
.close svg { width: 11px; height: 11px; }
.modal h3 { margin: 9px 0 15px; }
.latin { font-size: 13px; font-weight: 500; }
.mixed { font-size: 14px; }
.field { display: grid; grid-template-columns: 120px 1fr; align-items: center; margin-bottom: 18px; }
.field:has(.seg) { margin-bottom: 8px; }
.ctl { display: block; width: 100%; height: 32px; border: 1px solid #555; padding: 0 10px; color: #bdbdbd; }
.focus { border-color: #0089ff; }
.sel { position: relative; }
.sel .chev { position: absolute; right: 13px; top: 13px; width: 12px; height: 7px; color: #888; }
.seg { display: flex; }
.seg button { flex: 1; height: 32px; border: 1px solid #555; border-right: 0; }
.seg button:last-child { border-right: 1px solid #555; }
.seg .on { background: #0089ff; border-color: #0089ff; color: #fff; font-weight: 500; }
.mosaic { position: absolute; left: 63px; top: 12px; display: flex; height: 11px; }
.mosaic i { width: 20px; }
.mosaic.short { left: 54px; top: 9px; }
.short i:first-child { width: 10px; }
.m0 { background: #212121; } .m1 { background: #262626; } .m2 { background: #2c2c2c; } .m3 { background: #343434; } .m4 { background: #464646; } .m45 { background: #525252; } .m5 { background: #6c6c6c; }
.mark { position: absolute; inset: -8px -26px -11px -36px; border: 4px solid #f03e23; border-radius: 6px; pointer-events: none; }
.foot { display: flex; justify-content: flex-end; padding-top: 16px; }
.import { width: 60px; height: 32px; background: #0089ff; color: #fff; }
```
